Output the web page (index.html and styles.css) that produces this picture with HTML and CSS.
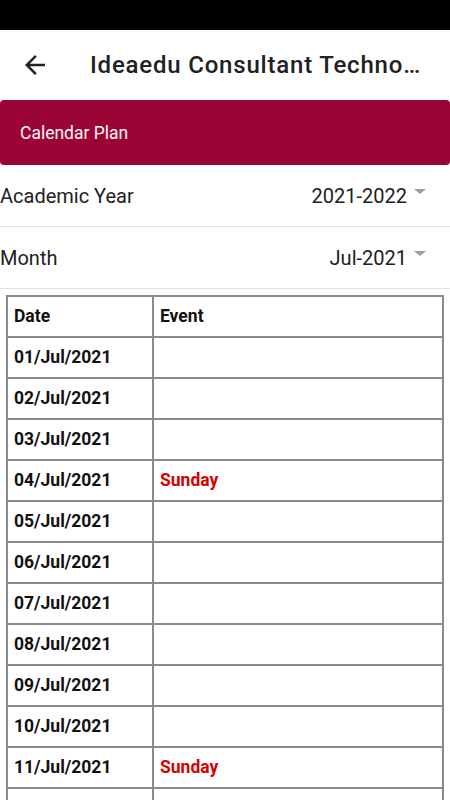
FILE: index.html
```html
<!DOCTYPE html>
<html>
<head>
  <title>Calendar Plan</title>
  <link rel="stylesheet" href="styles.css">
</head>
<body>
  <div class="status"></div>
  <div class="appbar">
    <svg class="back" viewBox="0 0 24 24" width="30" height="30">
      <path d="M20 11H7.83l5.59-5.59L12 4l-8 8 8 8 1.41-1.41L7.83 13H20v-2z" fill="#212121"/>
    </svg>
    <div class="title">Ideaedu Consultant Techno…</div>
  </div>
  <div class="card">Calendar Plan</div>
  <div class="field">
    <span class="label">Academic Year</span>
    <span class="value">2021-2022<i class="caret"></i></span>
  </div>
  <div class="field">
    <span class="label">Month</span>
    <span class="value">Jul-2021<i class="caret"></i></span>
  </div>
  <table class="plan">
    <thead>
      <tr><th class="date">Date</th><th>Event</th></tr>
    </thead>
    <tbody id="rows"></tbody>
  </table>
  <script>
    const rows = document.getElementById('rows');
    for (let d = 1; d <= 31; d++) {
      const day = String(d).padStart(2, '0');
      const sunday = (d - 4) % 7 === 0;
      const tr = document.createElement('tr');
      tr.innerHTML = '<td class="date">' + day + '/Jul/2021</td><td class="event">' + (sunday ? 'Sunday' : '') + '</td>';
      rows.appendChild(tr);
    }
  </script>
</body>
</html>
```

FILE: styles.css
```css
body {
  margin: 0;
  font-family: Roboto, "Noto Sans", sans-serif;
  background-color: #fff;
  color: #212121;
}

.status {
  height: 30px;
  background-color: #000;
}

.appbar {
  height: 70px;
  display: flex;
  align-items: center;
}

.back {
  margin-left: 20px;
  margin-right: 40px;
}

.title {
  font-size: 24px;
  font-weight: 500;
  letter-spacing: 0.8px;
  white-space: nowrap;
}

.card {
  height: 65px;
  background-color: #9b0535;
  border-radius: 4px;
  color: #f5f5f5;
  font-size: 17.5px;
  display: flex;
  align-items: center;
  padding-left: 20px;
}

.field {
  height: 61px;
  display: flex;
  align-items: center;
  justify-content: space-between;
  border-bottom: 1px solid #e2e2e2;
  font-size: 20px;
}

.value {
  display: flex;
  align-items: center;
  padding-right: 24px;
}

.caret {
  width: 0;
  height: 0;
  border-left: 6px solid transparent;
  border-right: 6px solid transparent;
  border-top: 5px solid #9e9e9e;
  margin-left: 7px;
  margin-top: -8px;
}

.plan {
  margin: 6px 6px 0;
  width: 438px;
  border-collapse: collapse;
  font-size: 17.5px;
  font-weight: bold;
  color: #111;
}

.plan th, .plan td {
  border: 2px solid #8a8a8a;
  height: 39px;
  padding: 0 6px 2px;
  text-align: left;
  box-sizing: border-box;
}

.plan tr {
  height: 41px;
}

.plan .date {
  width: 146px;
}

.plan .event {
  color: #d50000;
}
```
